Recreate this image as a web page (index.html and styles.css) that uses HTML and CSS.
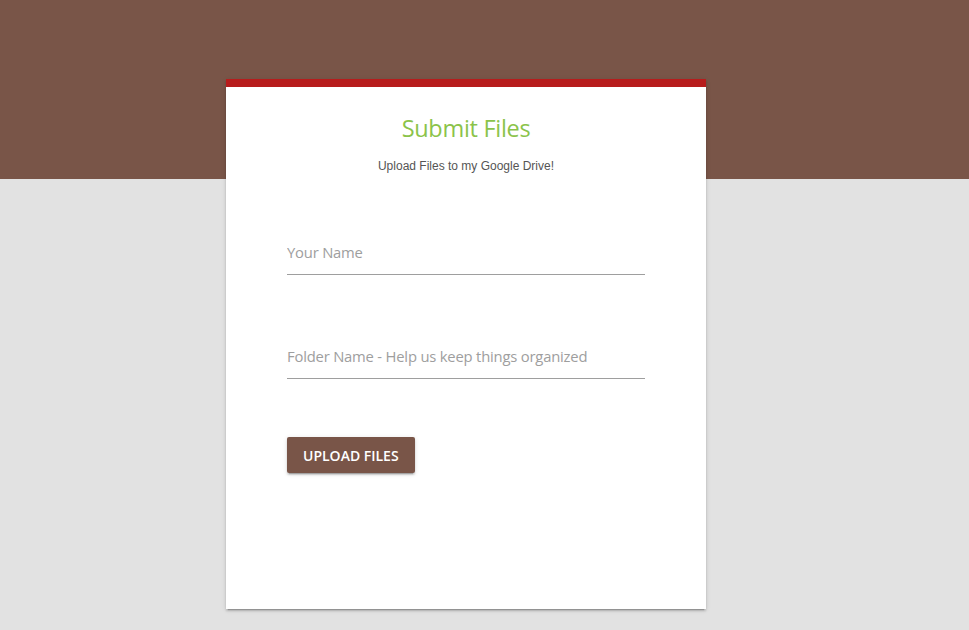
FILE: index.html
```html
<!DOCTYPE html>
<html>
<head>
<meta charset="utf-8">
<link rel="stylesheet" href="styles.css">
</head>
<body>
<main class="card">
  <h1 class="title">Submit Files</h1>
  <p class="subtitle">Upload Files to my Google Drive!</p>
  <form class="form">
    <input class="field" type="text" placeholder="Your Name">
    <input class="field" type="text" placeholder="Folder Name - Help us keep things organized">
    <button class="btn" type="button">Upload Files</button>
  </form>
</main>
</body>
</html>
```

FILE: styles.css
```css
html, body {
  margin: 0;
  padding: 0;
}
body {
  min-height: 630px;
  background: linear-gradient(to bottom, #795548 0, #795548 179px, #e2e2e2 179px, #e2e2e2 100%);
  font-family: "Open Sans", "Noto Sans", sans-serif;
  overflow: hidden;
}
.card {
  box-sizing: border-box;
  width: 480px;
  height: 530px;
  margin: 79px 0 0 226px;
  background: #fff;
  border-top: 8px solid #b71c1c;
  padding: 25px 61px 0;
  box-shadow: 0 2px 2px 0 rgba(0,0,0,0.14), 0 1px 5px 0 rgba(0,0,0,0.12), 0 3px 1px -2px rgba(0,0,0,0.2);
}
.title {
  margin: 0;
  font-weight: 400;
  font-size: 23.5px;
  line-height: 32px;
  color: #8bc34a;
  text-align: center;
  letter-spacing: -0.3px;
}
.subtitle {
  margin: 15px 0 0;
  font-family: "Liberation Sans", Arial, sans-serif;
  font-size: 12px;
  line-height: 14px;
  color: #555;
  text-align: center;
}
.form {
  display: flex;
  flex-direction: column;
  align-items: flex-start;
  margin-top: 56px;
}
.field {
  box-sizing: border-box;
  width: 100%;
  height: 46px;
  margin: 0 0 58px;
  padding: 0;
  border: none;
  border-bottom: 1px solid #9e9e9e;
  background: transparent;
  outline: none;
  font-family: "Open Sans", "Noto Sans", sans-serif;
  font-size: 14.8px;
  color: #333;
}
.field::placeholder {
  color: #9e9e9e;
  letter-spacing: -0.2px;
}
.btn {
  height: 36px;
  padding: 0 16px;
  border: none;
  border-radius: 2px;
  background: #795548;
  color: #fff;
  font-family: "Open Sans", "Noto Sans", sans-serif;
  font-size: 14px;
  font-weight: 600;
  letter-spacing: 0;
  text-transform: uppercase;
  box-shadow: 0 2px 2px 0 rgba(0,0,0,0.14), 0 1px 5px 0 rgba(0,0,0,0.12), 0 3px 1px -2px rgba(0,0,0,0.2);
  cursor: pointer;
}
```
